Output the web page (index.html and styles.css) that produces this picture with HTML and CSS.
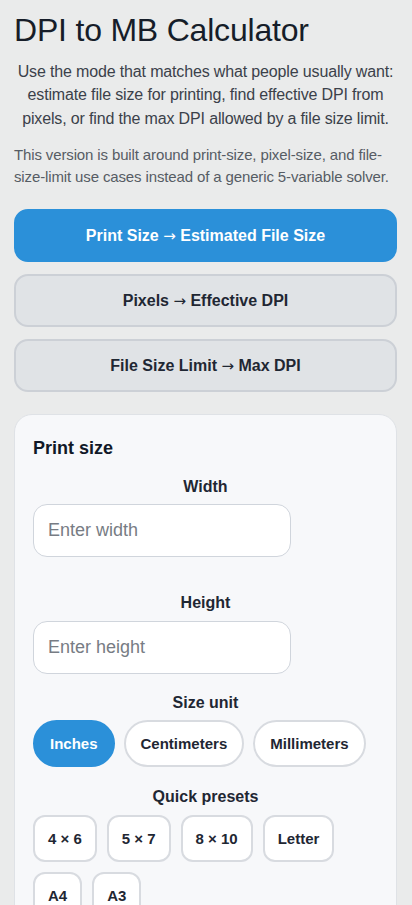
FILE: index.html
```html
<!DOCTYPE html>
<html lang="en">
  <head>
    <meta charset="UTF-8" />
    <meta name="viewport" content="width=device-width, initial-scale=1.0" />
    <title>DPI to MB Calculator</title>
    <link rel="stylesheet" href="styles.css">
  </head>
  <body>
    <h1>DPI to MB Calculator</h1>
    <p class="intro">Use the mode that matches what people usually want: estimate file size for printing, find effective DPI from pixels, or find the max DPI allowed by a file size limit.</p>
    <p class="note">This version is built around print-size, pixel-size, and file-size-limit use cases instead of a generic 5-variable solver.</p>

    <div class="modes">
      <button class="mode-button active" type="button">Print Size <span class="arrow">&rarr;</span> Estimated File Size</button>
      <button class="mode-button" type="button">Pixels <span class="arrow">&rarr;</span> Effective DPI</button>
      <button class="mode-button" type="button">File Size Limit <span class="arrow">&rarr;</span> Max DPI</button>
    </div>

    <section class="card">
      <h2>Print size</h2>

      <div class="field">
        <label for="width">Width</label>
        <input type="text" id="width" placeholder="Enter width" />
      </div>

      <div class="field">
        <label for="height">Height</label>
        <input type="text" id="height" placeholder="Enter height" />
      </div>

      <div class="group">
        <span class="group-label">Size unit</span>
        <div class="pills">
          <button class="pill active" type="button">Inches</button>
          <button class="pill" type="button">Centimeters</button>
          <button class="pill" type="button">Millimeters</button>
        </div>
      </div>

      <div class="group">
        <span class="group-label">Quick presets</span>
        <div class="presets">
          <button class="preset" type="button">4 &times; 6</button>
          <button class="preset" type="button">5 &times; 7</button>
          <button class="preset" type="button">8 &times; 10</button>
          <button class="preset" type="button">Letter</button>
          <button class="preset" type="button">A4</button>
          <button class="preset" type="button">A3</button>
        </div>
      </div>
    </section>
  </body>
</html>
```

FILE: styles.css
```css
body {
  font-family: "Liberation Sans", Arial, sans-serif;
  margin: 0;
  padding: 12px 15px 20px 14px;
  background-color: #eaebeb;
  color: #1c2430;
}
h1 {
  font-size: 32px;
  font-weight: normal;
  letter-spacing: -0.2px;
  line-height: 1.15;
  margin: 0 0 11px;
  color: #161d29;
}
.intro {
  text-align: center;
  font-size: 16px;
  letter-spacing: -0.15px;
  line-height: 23.5px;
  color: #3b414a;
  margin: 0 0 14px;
}
.note {
  font-size: 15px;
  letter-spacing: -0.13px;
  line-height: 22px;
  color: #565c64;
  margin: 0 0 21px;
}
.modes {
  display: flex;
  flex-direction: column;
  gap: 12px;
}
.mode-button {
  font-family: inherit;
  font-size: 16px;
  font-weight: bold;
  height: 53px;
  border: 2px solid #ccd0d6;
  border-radius: 14px;
  background-color: #e0e3e6;
  color: #1f2733;
  cursor: pointer;
}
.mode-button.active {
  background-color: #2b90d9;
  border-color: #2b90d9;
  color: white;
}
.arrow {
  font-family: "DejaVu Sans", sans-serif;
  font-weight: normal;
  font-size: 15px;
}
.card {
  margin-top: 22px;
  background-color: #f7f8fa;
  border: 1px solid #dfe2e6;
  border-radius: 18px;
  padding: 18px;
}
.card h2 {
  font-size: 18px;
  margin: 5px 0 19px;
  color: #111827;
}
.field {
  display: flex;
  flex-direction: column;
  margin-bottom: 37px;
}
.field label,
.group-label {
  display: block;
  text-align: center;
  font-weight: bold;
  font-size: 16px;
  margin-bottom: 8px;
  color: #1f2733;
}
.field:nth-of-type(2) label {
  margin-bottom: 9px;
}
.field input {
  width: 258px;
  height: 53px;
  box-sizing: border-box;
  padding: 0 14px;
  font-family: inherit;
  font-size: 18px;
  border: 1px solid #d0d5dc;
  border-radius: 14px;
  background-color: white;
}
.field input::placeholder {
  color: #777c84;
}
.field:nth-of-type(2) {
  margin-bottom: 20px;
}
.group {
  margin-bottom: 21px;
}
.pills,
.presets {
  display: flex;
  flex-wrap: wrap;
  gap: 10px 9px;
}
.presets {
  margin-top: 9px;
  gap: 10px;
}
.pill,
.preset {
  font-family: inherit;
  font-size: 15px;
  font-weight: bold;
  background-color: white;
  border: 2px solid #d8dbe0;
  color: #1f2733;
  cursor: pointer;
}
.pill {
  height: 47px;
  padding: 0 15px;
  border-radius: 24px;
}
.pill.active {
  background-color: #2b90d9;
  border-color: #2b90d9;
  color: white;
}
.preset {
  height: 47px;
  padding: 0 13px;
  border-radius: 12px;
}
```
